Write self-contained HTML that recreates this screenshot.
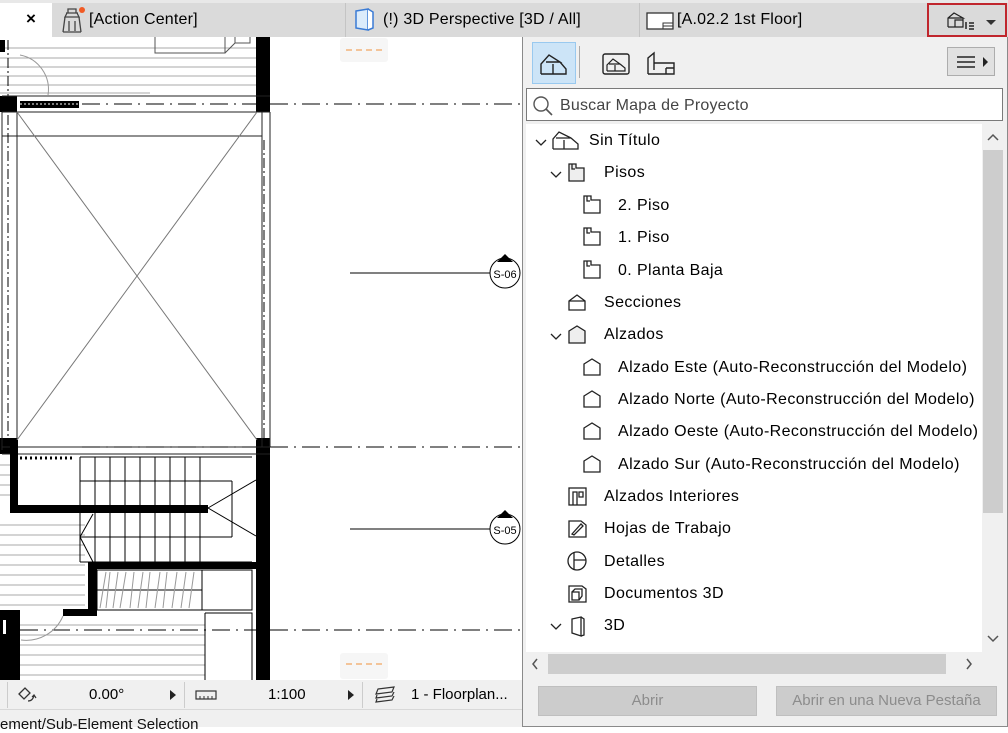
<!DOCTYPE html>
<html><head><meta charset="utf-8"><style>
*{margin:0;padding:0;box-sizing:border-box}
body{width:1008px;height:727px;overflow:hidden;background:#fff;font-family:"Liberation Sans",sans-serif;position:relative}
.abs{position:absolute}
.t{font-size:15px;color:#000;white-space:nowrap}
.row{position:absolute;height:24px;display:flex;align-items:center;font-size:16px;letter-spacing:0.4px;white-space:nowrap}
.tab{font-size:16px;letter-spacing:0.2px}
</style></head><body>

<svg class="abs" style="left:0;top:0" width="1008" height="727" viewBox="0 0 1008 727">
<g stroke="#aaa" stroke-width="1">
<path d="M0 48H256M0 58H256M0 67H256M0 76H256M0 85H256M0 93H150"/>
<path d="M0 525H85M0 535H85M0 545H85M0 555H85M0 565H85M0 575H85M0 585H85M0 595H85M0 605H85M18 625H205M18 635H205M18 645H205M18 655H205M18 665H205M18 675H205"/>
<path d="M0 465H10M0 475H10M0 485H10M0 495H10"/>
</g>
<path d="M155 37V53H225V37M225 53L235 43V37M235 43H250V37" stroke="#555" fill="none"/>
<path d="M20 55A35 35 0 0 1 48 95" stroke="#999" fill="none"/>
<path d="M8 40V96" stroke="#000" stroke-dasharray="10 3 2 3"/>
<rect x="256" y="37" width="14" height="75" fill="#000"/>
<rect x="256" y="438" width="14" height="242" fill="#000"/>
<rect x="0" y="96" width="17" height="16" fill="#000"/>
<rect x="0" y="438" width="17" height="16" fill="#000"/>
<rect x="0" y="40" width="5" height="12" fill="#000"/>
<path d="M2 96H270M2 112H270M2 136H262M2 447H270M2 454H270M2 112V450M17 112V440M270 112V447M262 112V447" stroke="#222" fill="none" stroke-width="1"/>
<path d="M8 115V440M264 140V440" stroke="#000" stroke-dasharray="10 3 2 3"/>
<path d="M17 112L257 440M257 112L17 440" stroke="#777" stroke-width="1"/>
<rect x="20" y="101" width="59" height="7" fill="#000"/>
<path d="M20 104H79" stroke="#fff" stroke-dasharray="2 2"/>
<path d="M20 458H75" stroke="#000" stroke-width="3" stroke-dasharray="2 3"/>
<g stroke="#000" stroke-width="1" stroke-dasharray="18 6 2 6">
<path d="M82 104H256M270 104H522"/>
<path d="M82 447H256M270 447H522"/>
<path d="M20 630H256M270 630H522"/>
</g>
<path d="M350 273H490M350 529H490" stroke="#000"/>
<circle cx="505" cy="273" r="15" fill="#fff" stroke="#000"/>
<path d="M497 262L505 254L513 262Z" fill="#000"/>
<text x="505" y="278" font-size="11" text-anchor="middle" font-family="Liberation Sans">S-06</text>
<circle cx="505" cy="529" r="15" fill="#fff" stroke="#000"/>
<path d="M497 518L505 510L513 518Z" fill="#000"/>
<text x="505" y="534" font-size="11" text-anchor="middle" font-family="Liberation Sans">S-05</text>
<g stroke="#000" fill="none">
<path d="M80 457H252M80 481H232M80 537H232M80 562H252M80 457V562M232 481V537"/>
<path d="M95 457V562M110 457V562M125 457V562M140 457V562M155 457V562M170 457V562M185 457V562M200 457V562"/>
<path d="M208 508L256 480M208 508L256 536M93 514L80 537L93 562"/>
<path d="M97 570H252V610H97ZM202 570V610M97 590H202M205 613H252V680M205 613V680"/>
</g>
<g stroke="#999"><path d="M100 608L106 572M106 608L110 572M113 608L118 572M120 608L126 572M130 608L134 572M138 608L143 572M146 608L150 572M155 608L160 572M163 608L167 572M172 608L177 572M181 608L186 572M189 608L194 572"/></g>
<rect x="10" y="440" width="8" height="72" fill="#000"/>
<rect x="10" y="505" width="198" height="8" fill="#000"/>
<rect x="88" y="562" width="182" height="7" fill="#000"/>
<rect x="88" y="562" width="9" height="53" fill="#000"/>
<rect x="63" y="609" width="34" height="7" fill="#000"/>
<rect x="0" y="610" width="20" height="70" fill="#000"/>
<rect x="3" y="620" width="3" height="14" fill="#fff"/>
<path d="M21 640A40 40 0 0 0 63 616" stroke="#999" fill="none"/>
<rect x="340" y="38" width="48" height="24" rx="3" fill="#f6f6f6"/>
<path d="M346 50H386" stroke="#f2b37a" stroke-width="1.5" stroke-dasharray="6 4"/>
<rect x="340" y="653" width="48" height="26" rx="3" fill="#f6f6f6"/>
<path d="M346 664H386" stroke="#f2b37a" stroke-width="1.5" stroke-dasharray="6 4"/>
</svg>

<div class="abs" style="left:0;top:0;width:1008px;height:37px;background:#dadada;border-top:3px solid #e8e8e8"></div>
<div class="abs" style="left:0;top:3px;width:52px;height:34px;background:#fff"></div>
<div class="abs t" style="left:26px;top:9px;font-size:17px;font-weight:bold">×</div>
<svg class="abs" style="left:58px;top:7px" width="28" height="27"><path d="M8 6H20M9 6L7 10H21L19 6M10 2H18V6H10ZM7 10L5 25M21 10L23 25M5 25H23M11 14V24M17 14V24" stroke="#444" fill="none" stroke-width="1.3"/><circle cx="24" cy="3" r="3" fill="#f15a24"/></svg>
<div class="abs t tab" style="left:89px;top:11px">[Action Center]</div>
<div class="abs" style="left:345px;top:3px;width:1px;height:34px;background:#c4c4c4"></div>
<svg class="abs" style="left:353px;top:7px" width="26" height="26"><path d="M3 4L15 2V23L3 21Z" fill="#dcecfb" stroke="#3a7bd5" stroke-width="1.5"/><path d="M15 2L20 5V21L15 23" fill="#fff" stroke="#3a7bd5" stroke-width="1.5"/></svg>
<div class="abs t tab" style="left:383px;top:11px">(!) 3D Perspective [3D / All]</div>
<div class="abs" style="left:639px;top:3px;width:1px;height:34px;background:#c4c4c4"></div>
<svg class="abs" style="left:646px;top:12px" width="30" height="20"><rect x="1" y="1" width="26" height="16" fill="#fff" stroke="#333" stroke-width="1.3"/><path d="M17 17V11H27M17 14H27" stroke="#333" fill="none"/></svg>
<div class="abs t tab" style="left:677px;top:11px">[A.02.2 1st Floor]</div>
<div class="abs" style="left:927px;top:3px;width:80px;height:34px;border:2px solid #c0262d"></div>
<svg class="abs" style="left:946px;top:10px" width="60" height="22"><path d="M2 17V8L8 3L17 8H2M17 8V17H2M9 17V10H17" stroke="#222" fill="none" stroke-width="1.2"/><path d="M20 12V19M23 13H28M23 16H28M23 19H28" stroke="#222" stroke-width="1.5"/><path d="M40 10H50L45 15Z" fill="#333"/></svg>

<div class="abs" style="left:522px;top:37px;width:486px;height:690px;background:#f0f0f0;border:1px solid #8a8a8a;border-top:none"></div>
<div class="abs" style="left:532px;top:42px;width:44px;height:42px;background:#cce4f7;border:1px solid #99c9ef"></div>
<svg class="abs" style="left:538px;top:50px" width="34" height="28"><path d="M3 24V14L11 5L22 12H8M22 12L28 19V24H3M15 24V14" stroke="#222" fill="none" stroke-width="1.4"/></svg>
<div class="abs" style="left:579px;top:46px;width:1px;height:32px;background:#aaa"></div>
<svg class="abs" style="left:600px;top:50px" width="34" height="28"><rect x="3" y="4" width="26" height="20" rx="2" fill="none" stroke="#222" stroke-width="1.4"/><path d="M7 21V15L13 9L20 14H9M20 14L25 18V21H7M15 21V15" stroke="#222" fill="none" stroke-width="1.2"/></svg>
<svg class="abs" style="left:644px;top:50px" width="34" height="28"><path d="M4 24V8L10 3V20M4 24H30V13H10M22 18H30M22 18V24" stroke="#222" fill="none" stroke-width="1.4"/></svg>
<div class="abs" style="left:947px;top:47px;width:48px;height:29px;background:#e1e1e1;border:1px solid #adadad"></div>
<svg class="abs" style="left:955px;top:53px" width="36" height="18"><path d="M2 4H20M2 9H20M2 14H20" stroke="#222" stroke-width="1.5"/><path d="M28 4L33 9L28 14Z" fill="#222"/></svg>
<div class="abs" style="left:526px;top:88px;width:477px;height:33px;background:#fff;border:1px solid #7a7a7a"></div>
<svg class="abs" style="left:532px;top:95px" width="22" height="22"><circle cx="9" cy="9" r="7" fill="none" stroke="#555" stroke-width="1.4"/><path d="M14 14L20 20" stroke="#555" stroke-width="1.6"/></svg>
<div class="abs t" style="left:560px;top:97px;color:#444;font-size:16px;letter-spacing:0.2px">Buscar Mapa de Proyecto</div>

<div class="abs" style="left:526px;top:124px;width:456px;height:528px;background:#fff;overflow:hidden">
<svg class="abs" style="left:0;top:0" width="90" height="528" fill="none" stroke="#222" stroke-width="1.3">
<path d="M10 16L15 21L20 16"/>
<path d="M27 25V15L33 8L45 14H30M45 14L52 20V25H27M38 25V16" />
<path d="M25 48L30 53L35 48"/>
<path d="M43 40H50V44H58V57H43Z" fill="#eee"/><path d="M46 40V45H49"/>
<path d="M58 72H65V76H74V89H58Z"/><path d="M61 72V77H64"/>
<path d="M58 104H65V108H74V121H58Z"/><path d="M61 104V109H64"/>
<path d="M58 137H65V141H74V154H58Z"/><path d="M61 137V142H64"/>
<path d="M43 177L51 171L59 177V186H43ZM43 177H59"/>
<path d="M25 210L30 215L35 210"/>
<path d="M43 207L51 202L59 207V219H43Z" fill="#eee"/>
<path d="M58 240L66 235L74 240V251H58Z"/>
<path d="M58 272L66 267L74 272V283H58Z"/>
<path d="M58 304L66 299L74 304V315H58Z"/>
<path d="M58 337L66 332L74 337V348H58Z"/>
<rect x="43" y="364" width="17" height="17"/><path d="M47 381V368H51V381M53 368H57V373H53Z"/>
<path d="M43 397H55L60 401V413H43ZM46 410L55 400L57 402L48 411Z"/>
<circle cx="51" cy="437" r="9"/><path d="M48 428V446M48 436H60"/>
<path d="M43 462H56L60 465V478H43ZM46 468H53V476H46ZM46 468L49 465H56V472L53 476"/>
<path d="M25 500L30 505L35 500"/>
<path d="M46 495L55 493V512L46 509ZM55 493L58 495V511L55 512"/>
</svg>
<div class="row" style="left:63px;top:5px">Sin Título</div>
<div class="row" style="left:78px;top:37px">Pisos</div>
<div class="row" style="left:92px;top:70px">2. Piso</div>
<div class="row" style="left:92px;top:102px">1. Piso</div>
<div class="row" style="left:92px;top:135px">0. Planta Baja</div>
<div class="row" style="left:78px;top:167px">Secciones</div>
<div class="row" style="left:78px;top:199px">Alzados</div>
<div class="row" style="left:92px;top:232px">Alzado Este (Auto-Reconstrucción del Modelo)</div>
<div class="row" style="left:92px;top:264px">Alzado Norte (Auto-Reconstrucción del Modelo)</div>
<div class="row" style="left:92px;top:296px">Alzado Oeste (Auto-Reconstrucción del Modelo)</div>
<div class="row" style="left:92px;top:329px">Alzado Sur (Auto-Reconstrucción del Modelo)</div>
<div class="row" style="left:78px;top:361px">Alzados Interiores</div>
<div class="row" style="left:78px;top:393px">Hojas de Trabajo</div>
<div class="row" style="left:78px;top:426px">Detalles</div>
<div class="row" style="left:78px;top:458px">Documentos 3D</div>
<div class="row" style="left:78px;top:490px">3D</div>
</div>
<div class="abs" style="left:982px;top:124px;width:22px;height:528px;background:#f0f0f0"></div>
<div class="abs" style="left:983px;top:150px;width:20px;height:363px;background:#cdcdcd"></div>
<svg class="abs" style="left:986px;top:132px" width="14" height="10"><path d="M2 8L7 3L12 8" stroke="#555" fill="none" stroke-width="1.5"/></svg>
<svg class="abs" style="left:986px;top:634px" width="14" height="10"><path d="M2 2L7 7L12 2" stroke="#555" fill="none" stroke-width="1.5"/></svg>
<div class="abs" style="left:526px;top:652px;width:456px;height:24px;background:#f0f0f0"></div>
<div class="abs" style="left:548px;top:654px;width:398px;height:20px;background:#cdcdcd"></div>
<svg class="abs" style="left:530px;top:657px" width="10" height="14"><path d="M7 2L3 7L7 12" stroke="#555" fill="none" stroke-width="1.5"/></svg>
<svg class="abs" style="left:964px;top:657px" width="10" height="14"><path d="M3 2L7 7L3 12" stroke="#555" fill="none" stroke-width="1.5"/></svg>
<div class="abs" style="left:538px;top:686px;width:219px;height:30px;background:#cccccc;border:1px solid #bfbfbf;color:#8c8c8c;font-size:15px;text-align:center;line-height:28px">Abrir</div>
<div class="abs" style="left:776px;top:686px;width:221px;height:30px;background:#cccccc;border:1px solid #bfbfbf;color:#8c8c8c;font-size:15px;text-align:center;line-height:28px">Abrir en una Nueva Pestaña</div>

<div class="abs" style="left:0;top:680px;width:522px;height:47px;background:#f0f0f0"></div>
<div class="abs" style="left:0;top:709px;width:522px;height:1px;background:#d8d8d8"></div>
<div class="abs" style="left:7px;top:682px;width:1px;height:26px;background:#ccc"></div>
<div class="abs" style="left:184px;top:682px;width:1px;height:26px;background:#ccc"></div>
<div class="abs" style="left:362px;top:682px;width:1px;height:26px;background:#ccc"></div>
<svg class="abs" style="left:16px;top:685px" width="24" height="20"><path d="M3 9L9 3L14 8L8 14Z" fill="none" stroke="#333" stroke-width="1.3"/><path d="M12 16Q17 16 18 10M16 12L18 10L20 13" stroke="#333" fill="none" stroke-width="1.2"/></svg>
<div class="abs t" style="left:89px;top:686px">0.00°</div>
<svg class="abs" style="left:168px;top:688px" width="10" height="14"><path d="M2 2L8 7L2 12Z" fill="#222"/></svg>
<svg class="abs" style="left:194px;top:688px" width="26" height="14"><rect x="2" y="3" width="20" height="8" fill="none" stroke="#333" stroke-width="1.2"/><path d="M6 11V8M10 11V8M14 11V8M18 11V8" stroke="#333"/></svg>
<div class="abs t" style="left:268px;top:686px">1:100</div>
<svg class="abs" style="left:346px;top:688px" width="10" height="14"><path d="M2 2L8 7L2 12Z" fill="#222"/></svg>
<svg class="abs" style="left:373px;top:684px" width="26" height="22"><path d="M5 5L21 3L19 8L3 10ZM4 11L3 14L19 12L21 8M4 15L3 18L19 16L21 12" fill="none" stroke="#333" stroke-width="1.2"/></svg>
<div class="abs t" style="left:411px;top:686px">1 - Floorplan...</div>
<div class="abs t" style="left:0;top:716px;font-size:15px;color:#111">ement/Sub-Element Selection</div>
</body></html>
